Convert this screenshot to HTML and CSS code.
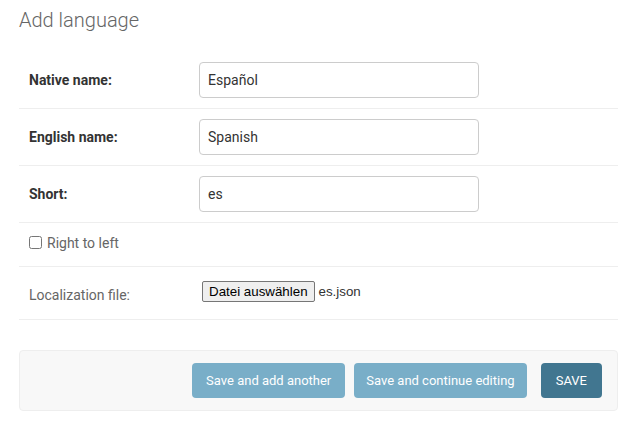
FILE: index.html
```html
<!DOCTYPE html>
<html>
<head>
<meta charset="utf-8">
<link rel="stylesheet" href="styles.css">
</head>
<body>
<div class="content">
  <h1 class="title">Add language</h1>
  <form class="form">
    <div class="form-row">
      <label class="label required">Native name:</label>
      <input class="text-input" type="text" value="Español">
    </div>
    <div class="form-row">
      <label class="label required">English name:</label>
      <input class="text-input" type="text" value="Spanish">
    </div>
    <div class="form-row">
      <label class="label required">Short:</label>
      <input class="text-input" type="text" value="es">
    </div>
    <div class="form-row check-row">
      <label class="check-label"><input class="checkbox" type="checkbox"><span>Right to left</span></label>
    </div>
    <div class="form-row file-row">
      <label class="label file-label">Localization file:</label>
      <div class="file-field">
        <button type="button" class="file-button">Datei auswählen</button>
        <span class="file-name">es.json</span>
      </div>
    </div>
    <div class="submit-row">
      <button type="button" class="btn btn-light btn-first">Save and add another</button>
      <button type="button" class="btn btn-light btn-second">Save and continue editing</button>
      <button type="button" class="btn btn-default">SAVE</button>
    </div>
  </form>
</div>
</body>
</html>
```
FILE: styles.css
```css
* { box-sizing: border-box; }
html, body { margin: 0; padding: 0; background: #fff; }
body {
  font-family: Roboto, "Liberation Sans", sans-serif;
  font-size: 14px;
  color: #333;
}
.content {
  padding: 0 21px 0 19px;
}
.title {
  margin: 8px 0 20px;
  font-size: 20px;
  line-height: 24px;
  font-weight: 300;
  color: #666;
}
.form { margin: 0; }
.form-row {
  display: flex;
  align-items: center;
  padding: 10px 10px;
  border-bottom: 1px solid #eee;
}
.label {
  width: 170px;
  flex: none;
  color: #666;
}
.label.required {
  font-weight: 700;
  color: #333;
}
.text-input {
  width: 280px;
  height: 36px;
  padding: 0 8px;
  border: 1px solid #ccc;
  border-radius: 4px;
  font-family: Roboto, "Liberation Sans", sans-serif;
  font-size: 14px;
  color: #333;
  outline: none;
}
.check-row {
  height: 44px;
  padding-top: 8px;
  padding-bottom: 12px;
}
.check-label {
  display: flex;
  align-items: center;
  color: #666;
}
.checkbox {
  width: 13px;
  height: 13px;
  margin: 0 5px 0 0;
}
.file-row {
  height: 53px;
  align-items: flex-start;
  padding-top: 14px;
}
.file-label {
  padding-top: 6px;
}
.file-field {
  display: flex;
  align-items: center;
  margin-left: 3px;
}
.file-button {
  height: 21px;
  padding: 0 6px;
  margin: 0 4px 0 0;
  background: #efefef;
  border: 1px solid #767676;
  border-radius: 2px;
  font-family: "Liberation Sans", Arial, sans-serif;
  font-size: 13.33px;
  color: #000;
}
.file-name {
  font-family: "Liberation Sans", Arial, sans-serif;
  font-size: 13.33px;
  color: #333;
}
.submit-row {
  display: flex;
  justify-content: flex-end;
  margin-top: 30px;
  padding: 12px 15px 12px 14px;
  background: #f8f8f8;
  border: 1px solid #eee;
  border-radius: 4px;
}
.btn {
  height: 35px;
  padding: 0 15px;
  border: none;
  border-radius: 4px;
  font-family: Roboto, "Liberation Sans", sans-serif;
  font-size: 13px;
  color: #fff;
}
.btn-light { background: #79aec8; }
.btn-default { background: #417690; }
.btn-first { padding: 0 14px; }
.btn-second { margin-left: 9px; padding: 0 12px; }
.btn-default { margin-left: 14px; }
```
